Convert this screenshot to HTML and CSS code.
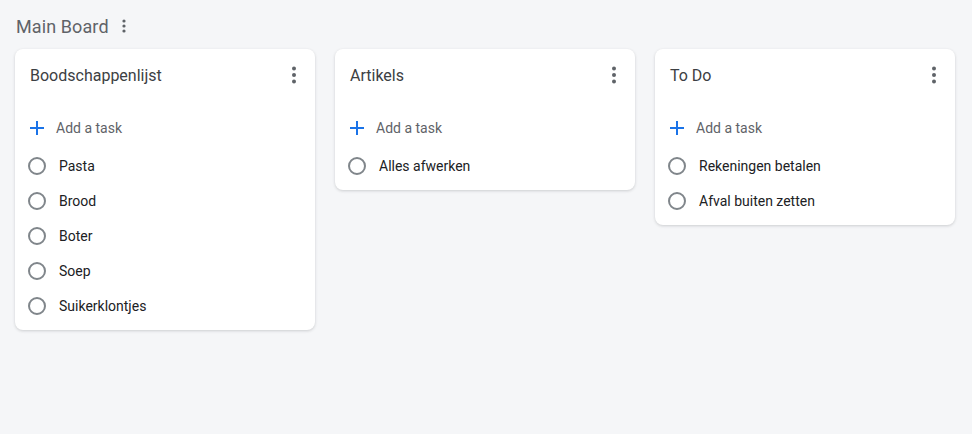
FILE: index.html
```html
<!DOCTYPE html>
<html lang="nl">
<head>
    <meta charset="UTF-8">
    <title>Main Board</title>
    <link rel="stylesheet" href="styles.css">
</head>
<body>
<div class="board">
    <div class="board-head">
        <span class="board-title">Main Board</span>
        <svg class="board-more" width="12" height="16" viewBox="0 0 12 16"><circle cx="6" cy="3" r="1.6"/><circle cx="6" cy="8" r="1.6"/><circle cx="6" cy="13" r="1.6"/></svg>
    </div>
    <div class="lists">
        <!--lijst 1-->
        <div class="list">
            <div class="list-head">
                <span class="list-title">Boodschappenlijst</span>
                <svg class="more" width="20" height="20" viewBox="0 0 20 20"><circle cx="10" cy="3.5" r="2"/><circle cx="10" cy="10" r="2"/><circle cx="10" cy="16.5" r="2"/></svg>
            </div>
            <div class="add">
                <svg class="plus" width="16" height="16" viewBox="0 0 16 16"><path d="M8 1v14M1 8h14"/></svg>
                <span>Add a task</span>
            </div>
            <ul class="tasks">
                <li><span class="check"></span>Pasta</li>
                <li><span class="check"></span>Brood</li>
                <li><span class="check"></span>Boter</li>
                <li><span class="check"></span>Soep</li>
                <li><span class="check"></span>Suikerklontjes</li>
            </ul>
        </div>
        <!--lijst 2-->
        <div class="list">
            <div class="list-head">
                <span class="list-title">Artikels</span>
                <svg class="more" width="20" height="20" viewBox="0 0 20 20"><circle cx="10" cy="3.5" r="2"/><circle cx="10" cy="10" r="2"/><circle cx="10" cy="16.5" r="2"/></svg>
            </div>
            <div class="add">
                <svg class="plus" width="16" height="16" viewBox="0 0 16 16"><path d="M8 1v14M1 8h14"/></svg>
                <span>Add a task</span>
            </div>
            <ul class="tasks">
                <li><span class="check"></span>Alles afwerken</li>
            </ul>
        </div>
        <!--lijst 3-->
        <div class="list">
            <div class="list-head">
                <span class="list-title">To Do</span>
                <svg class="more" width="20" height="20" viewBox="0 0 20 20"><circle cx="10" cy="3.5" r="2"/><circle cx="10" cy="10" r="2"/><circle cx="10" cy="16.5" r="2"/></svg>
            </div>
            <div class="add">
                <svg class="plus" width="16" height="16" viewBox="0 0 16 16"><path d="M8 1v14M1 8h14"/></svg>
                <span>Add a task</span>
            </div>
            <ul class="tasks">
                <li><span class="check"></span>Rekeningen betalen</li>
                <li><span class="check"></span>Afval buiten zetten</li>
            </ul>
        </div>
    </div>
</div>
</body>
</html>
```

FILE: styles.css
```css
* {
    padding: 0;
    margin: 0;
    box-sizing: border-box;
}
body {
    background-color: #f5f6f8;
    font-family: Roboto, "Liberation Sans", sans-serif;
}
.board {
    padding: 15px 15px;
}
.board-head {
    display: flex;
    align-items: center;
    height: 22px;
    margin-bottom: 12px;
    padding-left: 1px;
}
.board-title {
    font-size: 18px;
    color: #5f6368;
    letter-spacing: 0.1px;
}
.board-more {
    margin-left: 9px;
    fill: #5f6368;
}
.lists {
    display: flex;
    align-items: flex-start;
    gap: 20px;
}
.list {
    width: 300px;
    background-color: #fff;
    border-radius: 8px;
    box-shadow: 0 1px 3px rgba(60, 64, 67, .22);
    padding-bottom: 7px;
}
.list-head {
    display: flex;
    align-items: center;
    justify-content: space-between;
    height: 52px;
    padding: 0 11px 0 15px;
}
.list-title {
    font-size: 16px;
    color: #3c4043;
}
.more {
    fill: #5f6368;
}
.add {
    display: flex;
    align-items: center;
    height: 36px;
    margin-top: 9px;
    padding-left: 14px;
    font-size: 14px;
    color: #5f6368;
}
.plus {
    stroke: #1a73e8;
    stroke-width: 2;
    fill: none;
    margin-right: 11px;
}
.tasks {
    list-style: none;
    padding-top: 2px;
}
.tasks li {
    display: flex;
    align-items: center;
    height: 35px;
    padding-left: 14px;
    font-size: 14px;
    color: #202124;
}
.check {
    width: 18px;
    height: 18px;
    border: 2px solid #80868b;
    border-radius: 50%;
    margin-left: -1px;
    margin-right: 13px;
}
```
